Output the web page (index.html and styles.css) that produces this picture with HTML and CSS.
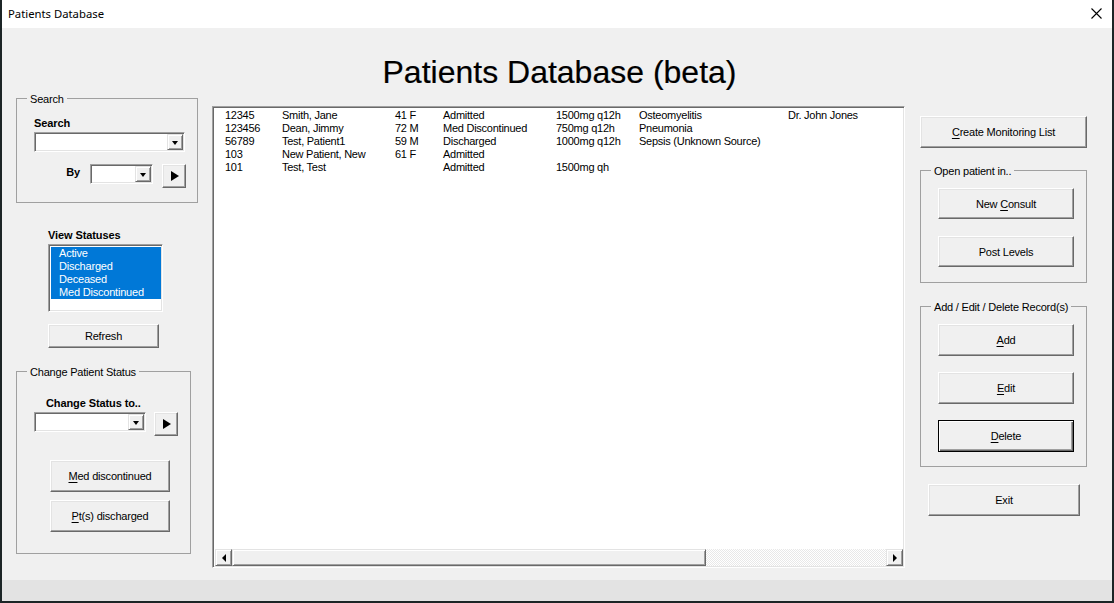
FILE: index.html
```html
<!DOCTYPE html>
<html lang="en">
<head>
<meta charset="utf-8">
<title>Patients Database</title>
<link rel="stylesheet" href="styles.css">
</head>
<body>
<div class="window">
  <div class="titlebar">
    <span class="title">Patients Database</span>
    <svg class="close" width="11" height="11" viewBox="0 0 11 11"><path d="M0.5 0.5L10.5 10.5M10.5 0.5L0.5 10.5" stroke="#000" stroke-width="1.1" fill="none"/></svg>
  </div>
  <div class="client">
    <h1 class="heading">Patients Database (beta)</h1>
    <div class="main">
      <div class="left">
        <div class="frame search-frame">
          <span class="frame-title">Search</span>
          <div class="label">Search</div>
          <div class="combo combo-search"><span class="drop"><i class="tri-down"></i></span></div>
          <div class="by-row">
            <span class="label by">By</span>
            <div class="combo combo-by"><span class="drop"><i class="tri-down"></i></span></div>
            <button class="btn arrow-btn"><i class="tri-right"></i></button>
          </div>
        </div>
        <div class="statuses">
          <div class="label">View Statuses</div>
          <ul class="status-list">
            <li class="sel">Active</li>
            <li class="sel">Discharged</li>
            <li class="sel">Deceased</li>
            <li class="sel">Med Discontinued</li>
          </ul>
          <button class="btn refresh"><span>Refresh</span></button>
        </div>
        <div class="frame change-frame">
          <span class="frame-title">Change Patient Status</span>
          <div class="label change-label">Change Status to..</div>
          <div class="change-row">
            <div class="combo combo-change"><span class="drop"><i class="tri-down"></i></span></div>
            <button class="btn arrow-btn"><i class="tri-right"></i></button>
          </div>
          <button class="btn status-btn first"><span><u>M</u>ed discontinued</span></button>
          <button class="btn status-btn"><span><u>P</u>t(s) discharged</span></button>
        </div>
      </div>

      <div class="list">
        <div class="rows">
          <div class="row"><span>12345</span><span>Smith, Jane</span><span>41 F</span><span>Admitted</span><span>1500mg q12h</span><span>Osteomyelitis</span><span>Dr. John Jones</span></div>
          <div class="row"><span>123456</span><span>Dean, Jimmy</span><span>72 M</span><span>Med Discontinued</span><span>750mg q12h</span><span>Pneumonia</span><span></span></div>
          <div class="row"><span>56789</span><span>Test, Patient1</span><span>59 M</span><span>Discharged</span><span>1000mg q12h</span><span>Sepsis (Unknown Source)</span><span></span></div>
          <div class="row"><span>103</span><span>New Patient, New</span><span>61 F</span><span>Admitted</span><span></span><span></span><span></span></div>
          <div class="row"><span>101</span><span>Test, Test</span><span></span><span>Admitted</span><span>1500mg qh</span><span></span><span></span></div>
        </div>
        <div class="hscroll">
          <span class="sb-btn"><i class="tri-left-s"></i></span>
          <span class="sb-thumb"></span>
          <span class="sb-track"></span>
          <span class="sb-btn"><i class="tri-right-s"></i></span>
        </div>
      </div>

      <div class="right">
        <button class="btn monitor-btn"><span><u>C</u>reate Monitoring List</span></button>
        <div class="frame open-frame">
          <span class="frame-title">Open patient in..</span>
          <button class="btn inner-btn"><span>New <u>C</u>onsult</span></button>
          <button class="btn inner-btn"><span>Post Levels</span></button>
        </div>
        <div class="frame record-frame">
          <span class="frame-title">Add / Edit / Delete Record(s)</span>
          <button class="btn inner-btn tall"><span><u>A</u>dd</span></button>
          <button class="btn inner-btn tall"><span><u>E</u>dit</span></button>
          <button class="btn inner-btn tall default"><span><u>D</u>elete</span></button>
        </div>
        <button class="btn exit-btn"><span>Exit</span></button>
      </div>
    </div>
    <div class="footer"></div>
  </div>
</div>
</body>
</html>
```

FILE: styles.css
```css
* { box-sizing: border-box; }

html, body {
  margin: 0;
  padding: 0;
  background: #1c2526;
  width: 1114px;
  height: 603px;
  overflow: hidden;
}

body {
  font-family: "Liberation Sans", Arial, sans-serif;
  font-size: 11px;
  color: #000;
}

.window {
  margin-left: 2px;
  width: 1110px;
  height: 601px;
  background: #f0f0f0;
  display: flex;
  flex-direction: column;
}

.titlebar {
  height: 28px;
  flex: none;
  background: #fff;
  display: flex;
  align-items: center;
  justify-content: space-between;
  padding: 0 10px 2px 6px;
}

.title {
  font-family: "Noto Sans", "Liberation Sans", sans-serif;
  font-size: 11.3px;
  color: #000;
}

.close { display: block; }

.client {
  flex: 1;
  display: flex;
  flex-direction: column;
}

.heading {
  margin: 0;
  height: 70px;
  flex: none;
  padding-top: 26px;
  padding-left: 5px;
  font-weight: normal;
  font-size: 32px;
  line-height: 36px;
  text-align: center;
  -webkit-text-stroke: 0.2px #000;
}

.main {
  flex: 1;
  display: flex;
  align-items: flex-start;
  padding-left: 14px;
}

.footer {
  height: 21px;
  flex: none;
  background: #e3e3e3;
}

/* ---------- shared controls ---------- */
.label {
  font-weight: bold;
  line-height: 13px;
  letter-spacing: -0.1px;
}

.frame {
  position: relative;
  border: 1px solid #a0a0a0;
}

.frame-title {
  position: absolute;
  top: -6px;
  left: 10px;
  padding: 0 3px;
  background: #f0f0f0;
  line-height: 13px;
  white-space: nowrap;
  letter-spacing: -0.2px;
}

.btn {
  display: flex;
  align-items: center;
  justify-content: center;
  padding: 0;
  margin: 0;
  font-family: "Liberation Sans", Arial, sans-serif;
  font-size: 11px;
  color: #000;
  background: #f0f0f0;
  border: 1px solid;
  border-color: #fff #696969 #696969 #fff;
  box-shadow: inset -1px -1px 0 #a0a0a0, inset 1px 1px 0 #e3e3e3;
  letter-spacing: -0.2px;
  white-space: nowrap;
}

.btn u { text-decoration-thickness: 1px; text-underline-offset: 2px; }

.combo {
  height: 20px;
  background: #fff;
  border: 1px solid;
  border-color: #a0a0a0 #fff #fff #a0a0a0;
  box-shadow: inset 1px 1px 0 #696969, inset -1px -1px 0 #e3e3e3;
  padding: 1px;
  display: flex;
  justify-content: flex-end;
}

.drop {
  width: 16px;
  height: 16px;
  background: #f0f0f0;
  border: 1px solid;
  border-color: #e3e3e3 #696969 #696969 #e3e3e3;
  box-shadow: inset 1px 1px 0 #fff, inset -1px -1px 0 #a0a0a0;
  display: flex;
  align-items: center;
  justify-content: center;
}

.tri-down {
  width: 0;
  height: 0;
  border-left: 3.5px solid transparent;
  border-right: 3.5px solid transparent;
  border-top: 4px solid #000;
  margin-top: 1px;
}

.arrow-btn {
  width: 24px;
  height: 24px;
  flex: none;
}

.tri-right {
  width: 0;
  height: 0;
  border-top: 5px solid transparent;
  border-bottom: 5px solid transparent;
  border-left: 8px solid #000;
  margin-left: 2px;
}

/* ---------- left column ---------- */
.left {
  width: 182px;
  flex: none;
  display: flex;
  flex-direction: column;
}

.search-frame {
  width: 182px;
  height: 105px;
  padding: 18px 0 0 17px;
}

.combo-search {
  width: 151px;
  margin-top: 2px;
}

.by-row {
  display: flex;
  align-items: flex-start;
  margin-top: 12px;
}

.by {
  width: 56px;
  text-align: right;
  padding-right: 10px;
  margin-top: 2px;
}

.combo-by { width: 63px; }

.by-row .arrow-btn { margin-left: 9px; }

.statuses {
  padding-left: 32px;
  margin-top: 26px;
}

.status-list {
  list-style: none;
  margin: 2px 0 0 0;
  padding: 2px 1px 1px 2px;
  width: 115px;
  height: 68px;
  background: #fff;
  border: 1px solid;
  border-color: #a0a0a0 #fff #fff #a0a0a0;
  box-shadow: inset 1px 1px 0 #696969, inset -1px -1px 0 #e3e3e3;
}

.status-list li {
  height: 13px;
  line-height: 13px;
  padding-left: 8px;
  letter-spacing: -0.2px;
}

.status-list li.sel {
  background: #0078d7;
  color: #fff;
}

.refresh {
  width: 111px;
  height: 24px;
  margin-top: 12px;
}

.change-frame {
  width: 175px;
  height: 183px;
  margin-top: 23px;
  padding: 25px 0 0 17px;
}

.change-label { margin-left: 12px; }

.change-row {
  display: flex;
  align-items: flex-start;
  margin-top: 2px;
}

.combo-change { width: 112px; }

.change-row .arrow-btn { margin-left: 8px; }

.status-btn {
  width: 120px;
  height: 32px;
  margin: 8px 0 0 16px;
}

.status-btn.first { margin-top: 24px; }

/* ---------- main list ---------- */
.list {
  width: 693px;
  height: 462px;
  flex: none;
  margin: 8px 0 0 14px;
  background: #fff;
  border: 1px solid;
  border-color: #a0a0a0 #fff #fff #a0a0a0;
  box-shadow: inset 1px 1px 0 #696969, inset -1px -1px 0 #e3e3e3;
  padding: 2px 1px 1px 2px;
  display: flex;
  flex-direction: column;
}

.rows {
  flex: 1;
}

.row {
  display: grid;
  grid-template-columns: 57px 113px 48px 113px 83px 149px 1fr;
  padding-left: 10px;
  height: 13px;
  line-height: 13px;
  white-space: nowrap;
  letter-spacing: -0.25px;
}

.hscroll {
  height: 17px;
  display: flex;
  flex: none;
}

.sb-btn {
  width: 17px;
  flex: none;
  background: #f0f0f0;
  border: 1px solid;
  border-color: #e3e3e3 #696969 #696969 #e3e3e3;
  box-shadow: inset 1px 1px 0 #fff, inset -1px -1px 0 #a0a0a0;
  display: flex;
  align-items: center;
  justify-content: center;
}

.sb-thumb {
  width: 474px;
  flex: none;
  background: #f0f0f0;
  border: 1px solid;
  border-color: #e3e3e3 #696969 #696969 #e3e3e3;
  box-shadow: inset 1px 1px 0 #fff, inset -1px -1px 0 #a0a0a0;
}

.sb-track {
  flex: 1;
  background-color: #fff;
  background-image: repeating-conic-gradient(#e8e8e8 0 25%, #fff 0 50%);
  background-size: 2px 2px;
}

.tri-left-s {
  width: 0;
  height: 0;
  border-top: 4px solid transparent;
  border-bottom: 4px solid transparent;
  border-right: 4px solid #000;
}

.tri-right-s {
  width: 0;
  height: 0;
  border-top: 4px solid transparent;
  border-bottom: 4px solid transparent;
  border-left: 4px solid #000;
}

/* ---------- right column ---------- */
.right {
  width: 167px;
  flex: none;
  margin: 18px 0 0 15px;
  display: flex;
  flex-direction: column;
}

.monitor-btn {
  width: 167px;
  height: 32px;
}

.open-frame {
  margin-top: 22px;
  height: 113px;
  padding: 17px 0 0 17px;
}

.inner-btn {
  width: 136px;
  height: 31px;
  margin-bottom: 17px;
}

.record-frame {
  margin-top: 23px;
  height: 161px;
  padding: 17px 0 0 17px;
}

.inner-btn.tall {
  height: 32px;
  margin-bottom: 16px;
}

.default {
  border: 1px solid #000;
  box-shadow: inset 1px 1px 0 #fff, inset -1px -1px 0 #696969, inset -2px -2px 0 #a0a0a0;
}

.exit-btn {
  width: 152px;
  height: 32px;
  margin: 17px 0 0 8px;
}
```
